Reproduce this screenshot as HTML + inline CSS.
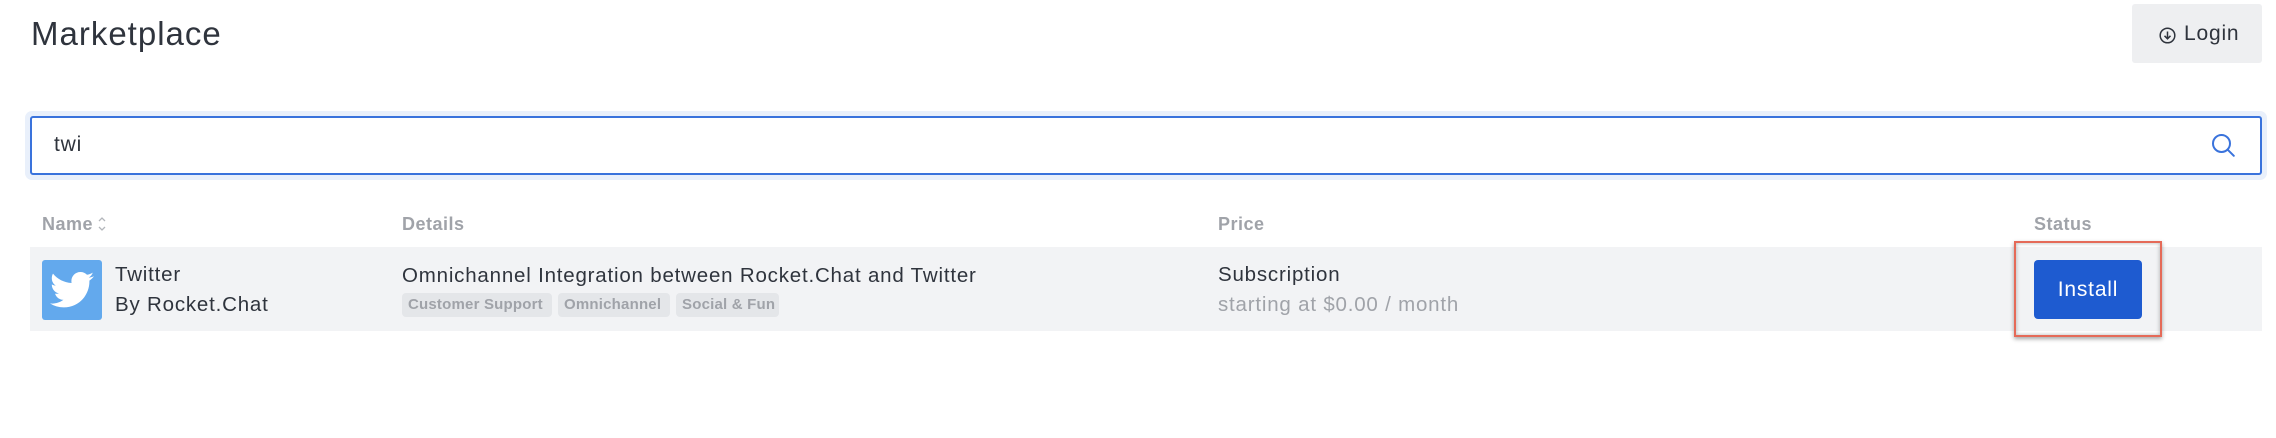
<!DOCTYPE html>
<html><head><meta charset="utf-8"><style>
*{margin:0;padding:0;box-sizing:border-box}
body{width:2276px;height:438px;background:#fff;font-family:"Liberation Sans",sans-serif;position:relative;overflow:hidden;color:#2f343d}
.a{position:absolute;white-space:nowrap}
.title{left:31px;top:14px;font-size:33px;line-height:40px;color:#2f343d;letter-spacing:1px}
.login{left:2132px;top:4px;width:130px;height:59px;background:#eeeff1;border-radius:3px}
.search{left:25px;top:111px;width:2242px;height:69px;background:#e9f0fb;border-radius:7px}
.sbox{left:30px;top:116px;width:2232px;height:59px;border:2px solid #3a73dc;border-radius:3px;background:#fff}
.hd{font-size:18px;font-weight:bold;color:#a0a3a9;top:213px;line-height:22px;letter-spacing:0.5px}
.row{left:30px;top:247px;width:2232px;height:84px;background:#f2f3f5}
.t{font-size:20.5px;line-height:24px;color:#2f343d;letter-spacing:0.8px}
.g{color:#a0a3a9}
.tag{top:293px;height:24px;background:#e4e6e9;border-radius:4px;font-size:15px;font-weight:bold;color:#a0a3a9;line-height:24px;padding:0 6px;letter-spacing:0.2px;overflow:hidden}
</style></head><body>
<div class="a title">Marketplace</div>
<div class="a login"></div>
<svg class="a" style="left:2159px;top:27px" width="17" height="17" viewBox="0 0 17 17"><circle cx="8.5" cy="8.5" r="7.3" fill="none" stroke="#2f343d" stroke-width="1.5"/><path d="M8.5 4.5v7M5.5 8.8l3 3 3-3" fill="none" stroke="#2f343d" stroke-width="1.5"/></svg>
<div class="a" style="left:2184px;top:21px;font-size:21px;line-height:26px;color:#2f343d;letter-spacing:0.8px">Login</div>
<div class="a search"></div>
<div class="a sbox"></div>
<div class="a t" style="left:54px;top:133px;font-size:21px">twi</div>
<svg class="a" style="left:2210px;top:132px" width="28" height="28" viewBox="0 0 28 28"><circle cx="11.5" cy="11.5" r="8.5" fill="none" stroke="#3a73dc" stroke-width="2"/><path d="M17.8 17.8l6 6" stroke="#3a73dc" stroke-width="2" stroke-linecap="round"/></svg>
<div class="a hd" style="left:42px">Name</div>
<svg class="a" style="left:97px;top:215px" width="10" height="18" viewBox="0 0 10 18"><path d="M2 6l3-3 3 3M2 12l3 3 3-3" fill="none" stroke="#b3b6bb" stroke-width="1.3"/></svg>
<div class="a hd" style="left:402px">Details</div>
<div class="a hd" style="left:1218px">Price</div>
<div class="a hd" style="left:2034px">Status</div>
<div class="a row"></div>
<div class="a" style="left:42px;top:260px;width:60px;height:60px;background:#63a9ed;border-radius:3px"></div>
<svg class="a" style="left:48px;top:267px" width="48" height="48" viewBox="0 0 24 24"><path fill="#fff" d="M23 4.6c-.8.4-1.7.6-2.6.7.9-.6 1.6-1.4 2-2.5-.9.5-1.9.9-2.9 1.1C18.7 3 17.5 2.5 16.2 2.5c-2.5 0-4.5 2-4.5 4.5 0 .4 0 .7.1 1C8 7.8 4.7 6 2.5 3.3c-.4.7-.6 1.4-.6 2.3 0 1.6.8 2.9 2 3.7-.7 0-1.4-.2-2-.6v.1c0 2.2 1.6 4 3.6 4.4-.4.1-.8.2-1.2.2-.3 0-.6 0-.8-.1.6 1.8 2.2 3.1 4.2 3.1-1.5 1.2-3.5 1.9-5.6 1.9-.4 0-.7 0-1.1-.1 2 1.3 4.4 2 6.9 2 8.3 0 12.8-6.9 12.8-12.8v-.6c.9-.6 1.6-1.4 2.3-2.2z"/></svg>
<div class="a t" style="left:115px;top:263px">Twitter</div>
<div class="a t" style="left:115px;top:293px">By Rocket.Chat</div>
<div class="a t" style="left:402px;top:264px">Omnichannel Integration between Rocket.Chat and Twitter</div>
<div class="a tag" style="left:402px;width:150px">Customer Support</div>
<div class="a tag" style="left:558px;width:112px">Omnichannel</div>
<div class="a tag" style="left:676px;width:103px">Social &amp; Fun</div>
<div class="a t" style="left:1218px;top:263px">Subscription</div>
<div class="a t g" style="left:1218px;top:293px">starting at $0.00 / month</div>
<div class="a" style="left:2014px;top:241px;width:148px;height:96px;border:2.5px solid #e56a58;box-shadow:0 2px 4px rgba(0,0,0,.35),inset 0 0 4px rgba(0,0,0,.3)"></div>
<div class="a" style="left:2034px;top:260px;width:108px;height:59px;background:#1e5bd0;border-radius:4px;color:#fff;font-size:21px;line-height:59px;text-align:center;letter-spacing:0.8px">Install</div>
</body></html>
